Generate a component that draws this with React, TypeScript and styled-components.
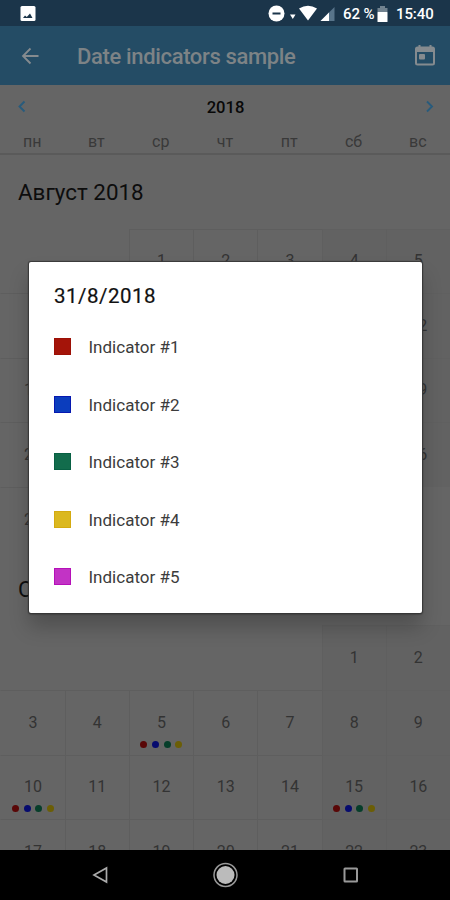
import React from "react";
import styled, { createGlobalStyle } from "styled-components";

const GlobalStyle = createGlobalStyle`
  * { box-sizing: border-box; }
  body { margin: 0; background: #000; font-family: Roboto, "Noto Sans", sans-serif; }
`;

const Screen = styled.div`
  position: relative;
  width: 450px;
  height: 900px;
  overflow: hidden;
  display: flex;
  flex-direction: column;
  background: #656565;
`;

const StatusBar = styled.header`
  height: 26px;
  flex: none;
  display: flex;
  align-items: center;
  justify-content: space-between;
  padding: 2px 15px 0 20px;
  background: #1b354a;
  color: #fff;
`;

const StatusGroup = styled.div`
  display: flex;
  align-items: center;
`;

const StatusText = styled.span<{ $width: number; $gap?: number }>`
  width: ${(p) => p.$width}px;
  margin-left: ${(p) => p.$gap ?? 0}px;
  font-size: 15px;
  line-height: 20px;
  font-weight: 500;
  white-space: nowrap;
  letter-spacing: -0.1px;
`;

const Toolbar = styled.div`
  height: 59px;
  flex: none;
  display: flex;
  align-items: center;
  padding: 1px 14px 0 18px;
  background: #244c65;
  color: #858b8f;
`;

const Title = styled.h1`
  flex: 1;
  margin: 1px 0 0 34px;
  font-size: 22px;
  line-height: 30px;
  font-weight: 500;
  letter-spacing: -0.35px;
  color: #7d8386;
`;

const YearBar = styled.div`
  height: 43px;
  flex: none;
  display: flex;
  align-items: center;
  justify-content: space-between;
  padding: 1px 15px 0 16px;
  font-size: 16.6px;
  font-weight: 500;
  color: #080808;
`;

const Weekdays = styled.div`
  height: 27px;
  flex: none;
  display: grid;
  grid-template-columns: repeat(7, 1fr);
  text-align: center;
  font-size: 16px;
  line-height: 27px;
  color: #393939;
  border-bottom: 2px solid #5a5a5a;
`;

const Months = styled.main`
  flex: none;
  height: 695px;
  overflow: hidden;
`;

const MonthTitle = styled.h2`
  height: 73.7px;
  margin: 0;
  padding-left: 18px;
  font-size: 22.4px;
  line-height: 74px;
  font-weight: 400;
  color: #0d0d0d;
`;

const MonthGrid = styled.div`
  display: grid;
  grid-template-columns: repeat(7, 1fr);
  grid-auto-rows: 64.6px;
  padding-left: 0.3px;
`;

const Day = styled.div<{ $empty: boolean; $weekend: boolean; $first: boolean }>`
  display: flex;
  flex-direction: column;
  align-items: center;
  padding-top: 20.6px;
  font-size: 16px;
  line-height: 22px;
  color: #333;
  background: ${(p) => (p.$weekend && !p.$empty ? "#626262" : "transparent")};
  border-top: 1px solid ${(p) => (p.$empty ? "transparent" : p.$weekend ? "#606060" : "#5e5e5e")};
  border-left: 1px solid
    ${(p) => (p.$empty || p.$first ? "transparent" : p.$weekend ? "#5f5f5f" : "#5e5e5e")};
`;

const Dots = styled.div`
  display: flex;
  gap: 4.7px;
  margin-top: 7px;
`;

const Dot = styled.i<{ $color: string }>`
  width: 7px;
  height: 7px;
  border-radius: 50%;
  background: ${(p) => p.$color};
`;

const NavBar = styled.nav`
  height: 50px;
  flex: none;
  display: flex;
  align-items: center;
  justify-content: space-between;
  padding: 0 91px 0 91px;
  background: #000;
`;

const Dialog = styled.section`
  position: absolute;
  left: 29px;
  top: 262px;
  width: 393px;
  height: 351px;
  padding: 21px 25px;
  border-radius: 2px;
  background: #fff;
  box-shadow: 0 0 1px 1px #383838, 0 1px 2px #2a2a2a, 0 14px 20px 0 rgba(0, 0, 0, 0.22);
`;

const DialogTitle = styled.h3`
  margin: 0 0 14px;
  font-size: 20.5px;
  line-height: 26px;
  font-weight: 400;
  letter-spacing: 0.5px;
  color: #111;
  -webkit-text-stroke: 0.2px #111;
`;

const IndicatorList = styled.ul`
  margin: 0;
  padding: 0;
  list-style: none;
`;

const IndicatorRow = styled.li`
  height: 57.5px;
  display: flex;
  align-items: flex-start;
  gap: 17.5px;
  padding-top: 15px;
  font-size: 17px;
  line-height: 18px;
  color: #3c3c3c;
`;

const Swatch = styled.span<{ $color: string; $edge: string }>`
  width: 17px;
  height: 17px;
  background: ${(p) => p.$color};
  border: 1px solid ${(p) => p.$edge};
`;

const weekdays = ["пн", "вт", "ср", "чт", "пт", "сб", "вс"];
const dotColors = ["#590707", "#060b6e", "#063e2a", "#6b5e06"];
const indicators = [
  { label: "Indicator #1", color: "#a41409", edge: "#9c1006" },
  { label: "Indicator #2", color: "#0b3dbd", edge: "#0618b0" },
  { label: "Indicator #3", color: "#126c4c", edge: "#086043" },
  { label: "Indicator #4", color: "#dbb81f", edge: "#d4aa10" },
  { label: "Indicator #5", color: "#c233c5", edge: "#b510b8" },
];

function Month({ title, offset, count, marked }: { title: string; offset: number; count: number; marked: number[] }) {
  const cells = Array.from({ length: offset + count }, (_, i) => i - offset + 1);
  return (
    <section>
      <MonthTitle>{title}</MonthTitle>
      <MonthGrid>
        {cells.map((day, i) => (
          <Day key={day} $empty={day < 1} $weekend={i % 7 > 4} $first={i % 7 === 0}>
            {day > 0 && day}
            {marked.includes(day) && (
              <Dots>
                {dotColors.map((c) => (
                  <Dot key={c} $color={c} />
                ))}
              </Dots>
            )}
          </Day>
        ))}
      </MonthGrid>
    </section>
  );
}

const PictureIcon = () => (
  <svg width="16" height="18" viewBox="0 0 16 18">
    <rect x="0.5" y="1" width="15" height="15" rx="1.5" fill="#fff" />
    <path d="M3 13l2-2.500 1.800 1.500L10 8.500l2.500 4.500z" fill="#1b354a" />
  </svg>
);

const SignalIcons = () => (
  <svg width="68" height="18" viewBox="0 0 68 18">
    <circle cx="8.500" cy="8.500" r="8" fill="#fff" />
    <rect x="4.500" y="7.500" width="8" height="2" fill="#1b354a" />
    <path d="M22 9.500h5.500l-2.700 4.600z" fill="#fff" />
    <path d="M31 3.500q9-5.500 18 0l-9 12z" fill="#fff" />
    <path d="M52.500 16L66.500 2v14z" fill="#58748a" />
    <path d="M52.500 16L61 7.500V16z" fill="#fff" />
  </svg>
);

const BatteryIcon = () => (
  <svg width="11" height="16" viewBox="0 0 11 16">
    <path d="M3 0h5v2h2.500v4H.5V2H3z" fill="#71828f" />
    <rect x="0.5" y="6" width="10" height="10" rx="0.5" fill="#fff" />
  </svg>
);

const BackIcon = () => (
  <svg width="25" height="26" viewBox="0 0 25 26" fill="none" stroke="currentColor" strokeWidth="1.8">
    <path d="M20.500 13H5M12.500 5.500L5 13l7.500 7.500" />
  </svg>
);

const TodayIcon = () => (
  <svg width="22" height="24" viewBox="0 0 22 24" fill="none" stroke="currentColor">
    <rect x="2" y="3.500" width="18" height="17" rx="1.500" strokeWidth="2" />
    <path d="M2 6h18" strokeWidth="4" />
    <path d="M5.500 1v4M16.500 1v4" strokeWidth="2" />
    <rect x="5" y="10" width="6" height="5.500" rx="1" fill="currentColor" stroke="none" />
  </svg>
);

const Chevron = ({ forward = false }: { forward?: boolean }) => (
  <svg width="11" height="14" viewBox="0 0 11 14" fill="none" stroke="#285b7c" strokeWidth="1.9">
    <path d={forward ? "M3 1.500L8 6.500l-5 5" : "M8.500 1.500l-5 5 5 5"} />
  </svg>
);

export default function App() {
  return (
    <>
      <GlobalStyle />
      <Screen>
        <StatusBar>
          <PictureIcon />
          <StatusGroup>
            <SignalIcons />
            <StatusText $width={34} $gap={7}>62 %</StatusText>
            <BatteryIcon />
            <StatusText $width={39} $gap={8}>15:40</StatusText>
          </StatusGroup>
        </StatusBar>
        <Toolbar>
          <BackIcon />
          <Title>Date indicators sample</Title>
          <TodayIcon />
        </Toolbar>
        <YearBar>
          <Chevron />
          <span>2018</span>
          <Chevron forward />
        </YearBar>
        <Weekdays>
          {weekdays.map((d) => (
            <span key={d}>{d}</span>
          ))}
        </Weekdays>
        <Months>
          <Month title="Август 2018" offset={2} count={31} marked={[]} />
          <Month title="Сентябрь 2018" offset={5} count={30} marked={[5, 10, 15]} />
        </Months>
        <NavBar>
          <svg width="18" height="18" viewBox="0 0 18 18">
            <path d="M15.500 2v14L3 9z" fill="none" stroke="#aaa" strokeWidth="1.700" />
          </svg>
          <svg width="26" height="26" viewBox="0 0 26 26">
            <circle cx="12.500" cy="13" r="11.500" fill="none" stroke="#999" strokeWidth="1.500" />
            <circle cx="12.500" cy="13" r="9" fill="#bbb" />
          </svg>
          <svg width="16" height="16" viewBox="0 0 16 16">
            <rect x="1.500" y="1.500" width="12.500" height="13" rx="0.500" fill="none" stroke="#999" strokeWidth="2" />
          </svg>
        </NavBar>
        <Dialog>
          <DialogTitle>31/8/2018</DialogTitle>
          <IndicatorList>
            {indicators.map((item) => (
              <IndicatorRow key={item.label}>
                <Swatch $color={item.color} $edge={item.edge} />
                <span>{item.label}</span>
              </IndicatorRow>
            ))}
          </IndicatorList>
        </Dialog>
      </Screen>
    </>
  );
}
